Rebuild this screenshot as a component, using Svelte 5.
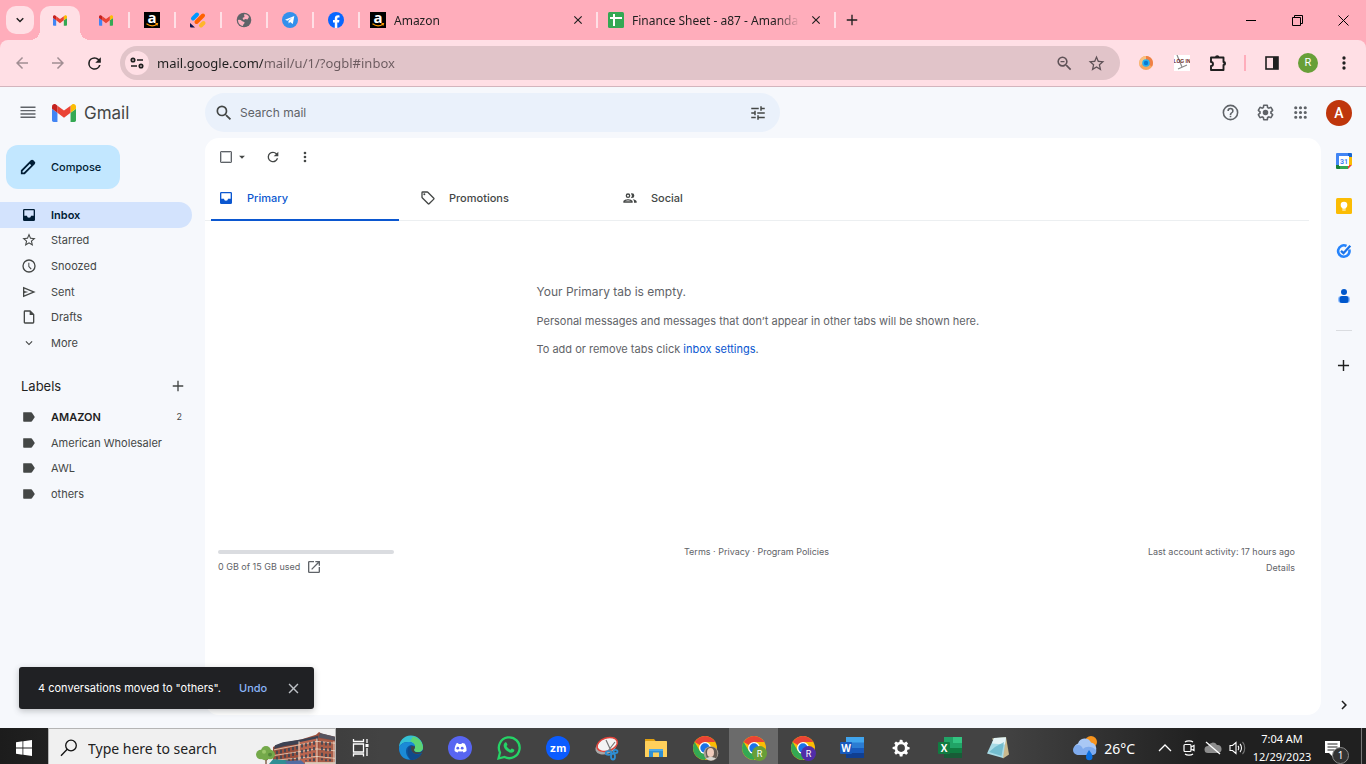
<script lang="ts">
  const icons: Record<string, string> = {
    menu: "M3 18h18v-1.700H3V18zm0-4h18v-1.700H3V14zm0-4h18V8.300H3V10zm0-5.700V6h18V4.300H3z",
    search:
      "M15.500 14h-.79l-.28-.27A6.470 6.470 0 0 0 16 9.500 6.500 6.500 0 1 0 9.500 16c1.610 0 3.090-.59 4.230-1.570l.27.28v.79l5 4.990L20.490 19l-4.990-5zm-6 0C7.010 14 5 11.990 5 9.500S7.010 5 9.500 5 14 7.010 14 9.500 11.990 14 9.500 14z",
    tune: "M3 17v2h6v-2H3zM3 5v2h10V5H3zm10 16v-2h8v-2h-8v-2h-2v6h2zM7 9v2H3v2h4v2h2V9H7zm14 4v-2H11v2h10zm-6-4h2V7h4V5h-4V3h-2v6z",
    help: "M11 18h2v-2h-2v2zm1-16a10 10 0 1 0 0 20 10 10 0 0 0 0-20zm0 18a8 8 0 1 1 0-16 8 8 0 0 1 0 16zm0-14a4 4 0 0 0-4 4h2a2 2 0 1 1 4 0c0 2-3 1.750-3 5h2c0-2.250 3-2.500 3-5a4 4 0 0 0-4-4z",
    gear: "M13.850 22.250h-3.700c-.74 0-1.360-.54-1.450-1.270l-.27-1.890c-.27-.14-.53-.29-.79-.46l-1.800.72c-.7.260-1.470-.03-1.810-.65L2.200 15.530c-.35-.66-.2-1.440.36-1.880l1.530-1.190c-.01-.15-.02-.3-.02-.46 0-.15.010-.31.020-.46l-1.520-1.190c-.59-.45-.74-1.260-.37-1.880l1.850-3.190c.34-.62 1.110-.9 1.790-.63l1.810.73c.26-.17.520-.32.780-.46l.27-1.910c.09-.7.710-1.250 1.440-1.250h3.700c.74 0 1.360.54 1.450 1.270l.27 1.890c.27.140.53.290.79.460l1.800-.72c.71-.26 1.480.03 1.820.65l1.840 3.180c.36.660.2 1.440-.36 1.880l-1.520 1.190c.01.150.02.300.02.460s-.01.310-.02.460l1.520 1.190c.56.450.72 1.230.37 1.860l-1.860 3.220c-.34.620-1.110.9-1.800.63l-1.800-.72c-.26.170-.52.320-.78.460l-.27 1.910c-.1.680-.72 1.220-1.460 1.220zm-3.230-2h2.760l.37-2.550.53-.22c.44-.18.880-.44 1.340-.78l.45-.34 2.380.96 1.380-2.400-2.030-1.580.07-.56c.03-.26.060-.51.060-.78s-.03-.53-.06-.78l-.07-.56 2.030-1.580-1.390-2.400-2.390.96-.45-.35c-.42-.32-.87-.58-1.330-.77l-.52-.22-.37-2.550h-2.760l-.37 2.550-.53.210c-.44.190-.88.440-1.340.79l-.45.330-2.380-.95-1.390 2.390 2.030 1.580-.07.56a7 7 0 0 0-.06.790c0 .26.020.53.060.78l.07.560-2.030 1.580 1.380 2.400 2.390-.96.45.350c.43.330.86.580 1.330.77l.53.220.38 2.550zM12 8.500a3.500 3.500 0 1 0 0 7 3.500 3.500 0 0 0 0-7z",
    apps: "M6 8a2 2 0 1 0 0-4 2 2 0 0 0 0 4zm6 0a2 2 0 1 0 0-4 2 2 0 0 0 0 4zm6 0a2 2 0 1 0 0-4 2 2 0 0 0 0 4zM6 14a2 2 0 1 0 0-4 2 2 0 0 0 0 4zm6 0a2 2 0 1 0 0-4 2 2 0 0 0 0 4zm6 0a2 2 0 1 0 0-4 2 2 0 0 0 0 4zM6 20a2 2 0 1 0 0-4 2 2 0 0 0 0 4zm6 0a2 2 0 1 0 0-4 2 2 0 0 0 0 4zm6 0a2 2 0 1 0 0-4 2 2 0 0 0 0 4z",
    pencil:
      "M20.700 4.600l-1.500-1.500a2.500 2.500 0 0 0-3.500 0L2.500 16.300V21.500h5.200L20.900 8.300a2.500 2.500 0 0 0-.2-3.700zM6.500 19.300l-1.800.1v-1.900l9.800-9.800 1.800 1.800-9.800 9.800z",
    inbox: "M19 3H5a2 2 0 0 0-2 2v14a2 2 0 0 0 2 2h14a2 2 0 0 0 2-2V5a2 2 0 0 0-2-2zm0 10h-4a3 3 0 0 1-6 0H5V5h14v8z",
    star: "M22 9.240l-7.190-.62L12 2 9.190 8.630 2 9.240l5.460 4.730L5.820 21 12 17.270 18.180 21l-1.630-7.030L22 9.240zM12 15.400l-3.760 2.270 1-4.280-3.320-2.880 4.380-.38L12 6.100l1.710 4.040 4.380.38-3.320 2.880 1 4.280L12 15.400z",
    clock: "M12 2a10 10 0 1 0 0 20 10 10 0 0 0 0-20zm0 18a8 8 0 1 1 0-16 8 8 0 0 1 0 16zm.5-13H11v6l3.700 4.200 1.300-1-3.500-4V7z",
    send: "M3 20V4l19 8L3 20zm2-3l11.850-5L5 7v3.500l6 1.500-6 1.500V17z",
    draft: "M14 2H6a2 2 0 0 0-2 2v16c0 1.100.9 2 2 2h12a2 2 0 0 0 2-2V8l-6-6zM6 20V4h7v5h5v11H6z",
    down: "M7.410 8.590L12 13.170l4.590-4.580L18 10l-6 6-6-6z",
    chevron: "M6.500 7.500L12 13l5.500-5.500L19.600 9.600 12 17.200 4.400 9.600z",
    right: "M8.590 16.590L13.170 12 8.590 7.410 10 6l6 6-6 6z",
    plus: "M19 12.900h-6.100V19h-1.800v-6.100H5v-1.800h6.100V5h1.800v6.100H19z",
    label: "M3 4h12.500c.8 0 1.500.4 1.900 1L22 12l-4.600 7c-.4.600-1.100 1-1.900 1H3c-1 0-1-1-1-1V5s0-1 1-1z",
    refresh:
      "M17.650 6.350A7.960 7.960 0 0 0 12 4a8 8 0 1 0 7.730 10h-2.080A6 6 0 1 1 12 6c1.660 0 3.140.69 4.220 1.780L13 11h7V4l-2.350 2.350z",
    more: "M12 8a2 2 0 1 0 0-4 2 2 0 0 0 0 4zm0 2a2 2 0 1 0 0 4 2 2 0 0 0 0-4zm0 6a2 2 0 1 0 0 4 2 2 0 0 0 0-4z",
    caret: "M7 10l5 5 5-5z",
    tag: "M21.410 11.580l-9-9A2 2 0 0 0 11 2H4a2 2 0 0 0-2 2v7c0 .55.220 1.050.59 1.420l9 9a2 2 0 0 0 2.820 0l7-7a2 2 0 0 0 0-2.840zM13 20L4 11V4h7l9 9-7 7zM6.500 5a1.500 1.500 0 1 0 0 3 1.500 1.500 0 0 0 0-3z",
    people:
      "M9 13.750c-2.340 0-7 1.170-7 3.500V19h14v-1.750c0-2.330-4.660-3.500-7-3.500zM4.340 17c.84-.58 2.870-1.250 4.660-1.250s3.820.67 4.660 1.250H4.340zM9 12a3.500 3.500 0 1 0 0-7 3.500 3.500 0 0 0 0 7zm0-5a1.500 1.500 0 1 1 0 3 1.500 1.500 0 0 1 0-3zm7.040 6.810c1.160.84 1.960 1.960 1.960 3.440V19h4v-1.750c0-2.020-3.500-3.170-5.960-3.440zM15 12a3.500 3.500 0 1 0 0-7c-.54 0-1.040.13-1.500.350a5 5 0 0 1 0 6.300c.46.220.96.350 1.500.350z",
    open: "M19 19H5V5h7V3H5a2 2 0 0 0-2 2v14a2 2 0 0 0 2 2h14a2 2 0 0 0 2-2v-7h-2v7zM14 3v2h3.590l-9.830 9.830 1.410 1.410L19 6.410V10h2V3h-7z",
    close: "M19 6.410L17.590 5 12 10.590 6.410 5 5 6.410 10.590 12 5 17.590 6.410 19 12 13.410 17.590 19 19 17.590 13.410 12z",
    back: "M20 11H7.830l5.590-5.590L12 4l-8 8 8 8 1.410-1.410L7.830 13H20v-2z",
    forward: "M4 11h12.170l-5.590-5.590L12 4l8 8-8 8-1.410-1.410L16.170 13H4v-2z",
    zoomOut:
      "M15.500 14h-.79l-.28-.27A6.470 6.470 0 0 0 16 9.500 6.500 6.500 0 1 0 9.500 16c1.610 0 3.090-.59 4.230-1.570l.27.28v.79l5 4.990L20.490 19l-4.990-5zm-6 0C7.010 14 5 11.990 5 9.500S7.010 5 9.500 5 14 7.010 14 9.500 11.990 14 9.500 14zM7 8.700h5v1.600H7z",
    settings:
      "M12 1l1.700.2.6 2.800 2 .9 2.500-1.500 2.300 2.400-1.500 2.400.8 2 2.800.6v2.600l-2.800.6-.8 2 1.500 2.400-2.300 2.400-2.500-1.500-2 .9-.6 2.800h-3.400L9.700 20l-2-.9-2.500 1.500-2.300-2.400 1.500-2.400-.8-2-2.800-.6v-2.600l2.800-.6.8-2-1.500-2.400 2.300-2.400 2.500 1.500 2-.9.600-2.800zM12 7a5 5 0 1 0 0 10 5 5 0 0 0 0-10z",
  };

  const pinnedTabs = ["gmail", "amazon", "jotform", "globe", "telegram", "facebook"];
  const openTabs = [
    { icon: "amazon", title: "Amazon" },
    { icon: "sheets", title: "Finance Sheet - a87 - Amanda H" },
  ];

  const folders = [
    { icon: "inbox", name: "Inbox" },
    { icon: "star", name: "Starred" },
    { icon: "clock", name: "Snoozed" },
    { icon: "send", name: "Sent" },
    { icon: "draft", name: "Drafts" },
    { icon: "down", name: "More" },
  ];

  const labels = [
    { name: "AMAZON", unread: 2 },
    { name: "American Wholesaler", unread: 0 },
    { name: "AWL", unread: 0 },
    { name: "others", unread: 0 },
  ];

  const categories = [
    { icon: "inbox", name: "Primary" },
    { icon: "tag", name: "Promotions" },
    { icon: "people", name: "Social" },
  ];

  const addons = ["calendar", "keep", "tasks", "contacts"];

  const taskbarApps = [
    "edge", "discord", "whatsapp", "zoom", "snip", "explorer", "chrome-photo",
    "chrome-green", "chrome-purple", "word", "settings", "excel", "notepad",
  ];

  let folder = $state("Inbox");
  let category = $state("Primary");
  let toastOpen = $state(true);
  let url = $state("mail.google.com/mail/u/1/?ogbl#inbox");
</script>

{#snippet icon(name: string, size = 16)}
  <svg class="icon" width={size} height={size} viewBox="0 0 24 24" fill="currentColor" aria-hidden="true">
    <path d={icons[name]} />
  </svg>
{/snippet}

{#snippet gmailLogo(width: number, height: number)}
  <svg class="icon" {width} {height} viewBox="52 42 88 66" aria-hidden="true">
    <path fill="#4285f4" d="M58 108h14V74L52 59v43c0 3.320 2.690 6 6 6" />
    <path fill="#34a853" d="M120 108h14c3.320 0 6-2.690 6-6V59l-20 15" />
    <path fill="#fbbc04" d="M120 48v26l20-15v-8c0-7.420-8.470-11.650-14.400-7.200" />
    <path fill="#ea4335" d="M72 74V48l24 18 24-18v26L96 92" />
    <path fill="#c5221f" d="M52 51v8l20 15V48l-5.600-4.200c-5.940-4.450-14.400-.22-14.400 7.200" />
  </svg>
{/snippet}

{#snippet favicon(name: string)}
  {#if name === "gmail"}
    {@render gmailLogo(14, 11)}
  {:else}
    <svg class="icon" width="16" height="16" viewBox="0 0 16 16" aria-hidden="true">
      {#if name === "amazon"}
        <rect width="16" height="16" fill="#000" />
        <text x="8" y="11" text-anchor="middle" font-size="15" font-weight="700" fill="#fff" font-family="Open Sans, sans-serif">a</text>
        <path d="M2.500 11.800c3.500 2.500 7.500 2.400 10.500.4M11.500 11.600l2-.1-.5 2" fill="none" stroke="#f90" stroke-width="1.100" />
      {:else if name === "jotform"}
        <g fill="none" stroke-width="4" stroke-linecap="round">
          <path d="M3 6.500L7 2.500" stroke="#0099ff" />
          <path d="M6.500 10L13 3.500" stroke="#ff6100" />
          <path d="M11 13.500l2.500-2.500" stroke="#ffb629" />
        </g>
        <path d="M0 11l5 4.500H1a1 1 0 0 1-1-1z" fill="#0a1551" />
      {:else if name === "globe"}
        <circle cx="8" cy="8" r="7.300" fill="#5f6368" />
        <path d="M2 8c1.500-.5 3 0 4 1s3 .5 2.500 2-1.500 1-1.500 3c-3-.3-5-3-5-6zM8 2.500c2-.7 4 .5 5 2.500l-1.500 2.500-2-.5-2 1L6.500 6l2-1z" fill="#ffb0bf" />
      {:else if name === "telegram"}
        <circle cx="8" cy="8" r="8" fill="#3390ec" />
        <path d="M3 7.800l9.300-3.900-1.500 8.200-2.700-2-1.400 1.400-.3-2.500 3.700-3.200-4.700 2.900z" fill="#fff" />
      {:else if name === "facebook"}
        <circle cx="8" cy="8" r="8" fill="#0866ff" />
        <path d="M6.800 16v-5.500H5V8h1.800V6.700c0-2.300 1.100-3.400 3.300-3.400.5 0 1 .1 1.400.2v2.100h-.9c-1 0-1.300.4-1.300 1.300V8h2.100l-.4 2.500H9.300V16z" fill="#fff" />
      {:else if name === "sheets"}
        <rect width="16" height="16" rx="1.500" fill="#34a853" />
        <path d="M2 6h12M6 2v12" stroke="#fff" stroke-width="2" />
      {/if}
    </svg>
  {/if}
{/snippet}

{#snippet addon(name: string)}
  <svg class="icon" width="16" height="16" viewBox="0 0 16 16" aria-hidden="true">
    {#if name === "calendar"}
      <path d="M1 0h11v4H4v9H0V1a1 1 0 0 1 1-1z" fill="#4285f4" />
      <path d="M12 0h3a1 1 0 0 1 1 1v3h-4z" fill="#1967d2" />
      <path d="M12 4h4v8h-4z" fill="#fbbc04" />
      <path d="M0 12h4v4H1a1 1 0 0 1-1-1z" fill="#188038" />
      <path d="M4 12h8v4H4z" fill="#34a853" />
      <path d="M12 12h4l-4 4z" fill="#ea4335" />
      <path d="M3 3h10v10H3z" fill="#fff" />
      <text x="8" y="11" text-anchor="middle" font-size="7" font-weight="700" fill="#4285f4" font-family="Roboto, sans-serif">31</text>
    {:else if name === "keep"}
      <rect width="16" height="16" rx="1.500" fill="#fbbc04" />
      <circle cx="8" cy="7" r="3.300" fill="#fff" />
      <path d="M6.300 9h3.400v1.700H6.300zM6.300 11.400h3.400v1.200H6.300z" fill="#fff" />
    {:else if name === "tasks"}
      <path d="M13.300 6.500A5.700 5.700 0 1 1 10.500 3" fill="none" stroke="#2684fc" stroke-width="2.600" />
      <path d="M5 7.800l2.500 2.400 6.800-7.400" fill="none" stroke="#1a73e8" stroke-width="2.300" />
    {:else if name === "contacts"}
      <circle cx="8" cy="4" r="3" fill="#0057cc" />
      <rect x="2" y="8" width="12" height="7" rx="3" fill="#91bfff" />
      <rect x="3.500" y="8" width="9" height="7" rx="2.500" fill="#0057cc" />
    {/if}
  </svg>
{/snippet}

{#snippet chromeIcon()}
  <circle cx="11" cy="11" r="11" fill="#fbbc04" />
  <path d="M11 11L1.500 5.500A11 11 0 0 1 20.500 5.500H11z" fill="#ea4335" />
  <path d="M1.500 5.500A11 11 0 0 0 11 22l4.700-8.200L11 11 6.300 13.700z" fill="#34a853" />
  <circle cx="11" cy="11" r="5.500" fill="#fff" />
  <circle cx="11" cy="11" r="4.300" fill="#1a73e8" />
{/snippet}

{#snippet taskbarIcon(name: string)}
  <svg class="icon" width="26" height="26" viewBox="0 0 26 26" aria-hidden="true">
    {#if name === "edge"}
      <circle cx="13" cy="13" r="12" fill="#0c59a4" />
      <path d="M1 13A12 12 0 0 1 25 12c.3 3-2 5-5 5-2 0-4-.5-4-2 0-1 1-1.500 1-3.500C17 9 14 7 10 7 5 7 1.500 10 1 13z" fill="#35c1d4" />
      <path d="M15 1.500A12 12 0 0 1 25 12c.3 3-2 5-5 5-2 0-4-.5-4-2 0-1 1-1.500 1-3.500 0-3-3-5-5-5z" fill="#66d85c" opacity="0.800" />
      <path d="M1 13c.5-3 4-6 9-6 4 0 7 2 7 4.500-1-1-2.500-1.500-4-1.500-6 1-7 9-1 14.500C5 25 1 19 1 13z" fill="#1b8ad6" />
      <path d="M9.500 16c0-3 1.500-5 4-5.500-2 4 1 9 6 9 1.500 0 3-.5 4-1-2 4-6 6.500-10.500 6.500-2-2-3.500-5-3.500-9z" fill="#114a8b" />
      <path d="M13.500 11c-1.500 3 .5 7.500 5 8 3 .4 5-1 6-2l1-2c-1.500 2-3.500 2.500-5.500 2.500-2 0-4-.8-4-2.500 0-1 1-1.500 1-3.500z" fill="#434343" />
    {:else if name === "discord"}
      <circle cx="13" cy="13" r="12" fill="#5865f2" />
      <path d="M8.500 8.500L11 8l.6 1h2.800l.6-1 2.500.5c1.500 2 2.300 4.500 2 7.500-1 .9-2 1.300-3 1.500l-.8-1.200c-1.300.4-2.800.4-4.200 0l-.8 1.200c-1.200-.2-2.200-.7-3.100-1.500-.2-3 .5-5.500 2-7.500z" fill="#fff" />
      <circle cx="10.800" cy="13.200" r="1.400" fill="#5865f2" />
      <circle cx="15.200" cy="13.200" r="1.400" fill="#5865f2" />
    {:else if name === "whatsapp"}
      <path d="M2.500 23.500l1.500-6A10.400 10.400 0 1 1 8.500 22z" fill="none" stroke="#25d366" stroke-width="2.300" />
      <path d="M9 7.500c.6-.5 1.300-.4 1.600.3l.8 1.700c.2.600-.6 1.200-.9 1.600.8 1.700 2 2.900 3.900 3.700.6-.6 1-1.500 1.600-1.300l2 1c.7.400.2 1.600-.3 2.200-2.300 2-5.500.5-7.500-1.400C7.800 13 6.500 9.800 9 7.500z" fill="#25d366" />
    {:else if name === "zoom"}
      <circle cx="13" cy="13" r="12" fill="#0b5cff" />
      <text x="13" y="17" text-anchor="middle" font-size="11" font-weight="700" fill="#fff" font-family="Inter, sans-serif">zm</text>
    {:else if name === "snip"}
      <ellipse cx="12" cy="12" rx="11" ry="7" transform="rotate(-20 12 12)" fill="#a9a9a9" />
      <ellipse cx="13" cy="9.500" rx="10.500" ry="6.500" transform="rotate(-18 13 9)" fill="#f4f4f4" stroke="#e0433b" stroke-width="1.500" />
      <path d="M12 5l6 13M21 7l-7 9" stroke="#777" stroke-width="1.200" />
      <g fill="none" stroke="#2f8fd3" stroke-width="1.800">
        <ellipse cx="14.500" cy="18" rx="2.800" ry="1.800" />
        <ellipse cx="19" cy="21.500" rx="2" ry="3" />
        <ellipse cx="21.500" cy="16.500" rx="2" ry="1.600" />
      </g>
    {:else if name === "explorer"}
      <path d="M2 4h9l2 2.500H2z" fill="#e0a010" />
      <rect x="2" y="6" width="22" height="16" rx="0.500" fill="#ffd05b" />
      <path d="M6 14h14v8h-4v-4.500h-6V22H6z" fill="#2f8fd3" />
      <path d="M6 14h14v2H6z" fill="#4fa9e4" />
    {:else if name.startsWith("chrome")}
      <g transform="translate(1 1) scale(1.09)">{@render chromeIcon()}</g>
      {#if name === "chrome-photo"}
        <circle cx="19" cy="18.500" r="7.300" fill="#a9a196" />
        <path d="M13.500 17c0-6 10-7 11.500-1 1 5-1 9-4 9.500l-6-1.500z" fill="#655b53" />
        <ellipse cx="18.500" cy="17.500" rx="3.500" ry="4.500" fill="#f0cdbd" />
        <path d="M14 23.500c2-2 7-2 10 0a7.300 7.300 0 0 1-10 0z" fill="#d8d6d0" />
      {:else}
        <circle cx="18.500" cy="18.500" r="7.500" fill={name === "chrome-green" ? "#689f38" : "#512da8"} />
        <text x="18.500" y="22" text-anchor="middle" font-size="9" fill="#fff" font-family="Roboto, sans-serif">R</text>
      {/if}
    {:else if name === "word" || name === "excel"}
      {#if name === "word"}
        <path d="M7 2h18v6H7z" fill="#41a5ee" />
        <path d="M7 7.500h18V13H7z" fill="#2b7cd3" />
        <path d="M7 13h18v5H7z" fill="#185abd" />
        <path d="M7 18h18v5H7z" fill="#103f91" />
      {:else}
        <path d="M7 2h18v21H7z" fill="#185c37" />
        <path d="M7 2h9v6H7zM7 8h9v5H7z" fill="#21a366" />
        <path d="M16 2h9v6h-9z" fill="#33c481" />
        <path d="M16 8h9v5h-9z" fill="#21a366" />
        <path d="M16 13h9v5h-9zM7 13h9v5H7z" fill="#107c41" />
      {/if}
      <rect x="1" y="7" width="12" height="12" rx="1" fill={name === "word" ? "#185abd" : "#107c41"} />
      <text x="7" y="17" text-anchor="middle" font-size="10" font-weight="700" fill="#fff" font-family="Open Sans, sans-serif">{name === "word" ? "W" : "X"}</text>
    {:else if name === "settings"}
      <g transform="translate(4 4) scale(.76)"><path d={icons.settings} fill="#fff" fill-rule="evenodd" /></g>
    {:else if name === "notepad"}
      <path d="M6 3.500L20 2l3 17.500-6 4z" fill="#c9b98d" />
      <path d="M8 3l12-.5L17 23 1 18.500z" fill="#a8dbe6" />
      <path d="M8 3l12-.5-1 7-13-1z" fill="#e4f3f5" />
      <path d="M9 12l9-5-2.500 14L3 17z" fill="#5cb0c4" opacity="0.700" />
    {/if}
  </svg>
{/snippet}

<div class="screen">
  <header class="browser">
    <div class="tabstrip">
      <button class="tab-search" aria-label="Search tabs">{@render icon("chevron", 12)}</button>
      <button class="tab tab-active" aria-label="Inbox">{@render favicon("gmail")}</button>
      {#each pinnedTabs as name}
        <button class="tab tab-pinned" aria-label={name}>{@render favicon(name)}</button>
      {/each}
      {#each openTabs as tab}
        <div class="tab tab-wide">
          {@render favicon(tab.icon)}
          <span class="tab-title">{tab.title}</span>
          <button class="tab-close" aria-label="Close tab">{@render icon("close", 14)}</button>
        </div>
      {/each}
      <button class="new-tab" aria-label="New tab">{@render icon("plus", 18)}</button>
      <div class="window-controls">
        <button aria-label="Minimize">
          <svg width="10" height="10" viewBox="0 0 10 10"><path d="M0 5.500h10" stroke="#000" /></svg>
        </button>
        <button aria-label="Restore">
          <svg width="11" height="11" viewBox="0 0 11 11" fill="none" stroke="#000">
            <path d="M.5 2.500h8v8h-8zM2.500 2.500v-2h8v8h-2" />
          </svg>
        </button>
        <button aria-label="Close window">
          <svg width="11" height="11" viewBox="0 0 11 11"><path d="M.5.500l10 10M10.500.500l-10 10" stroke="#000" /></svg>
        </button>
      </div>
    </div>

    <div class="toolbar">
      <button class="tool tool-dim" aria-label="Back">{@render icon("back", 18)}</button>
      <button class="tool tool-dim" aria-label="Forward">{@render icon("forward", 18)}</button>
      <button class="tool" aria-label="Reload">{@render icon("refresh", 19)}</button>
      <div class="omnibox">
        <button class="site-info" aria-label="Site information">
          <svg width="14" height="12" viewBox="0 0 14 12" fill="none" stroke="#1f1f1f" stroke-width="1.700">
            <circle cx="3" cy="3" r="1.700" />
            <path d="M7 3h6M1 9h6" />
            <circle cx="11" cy="9" r="1.700" />
          </svg>
        </button>
        <input class="url" type="text" aria-label="Address" bind:value={url} />
        <button class="omni-button" aria-label="Zoom">{@render icon("zoomOut", 19)}</button>
        <button class="omni-button" aria-label="Bookmark">{@render icon("star", 19)}</button>
      </div>
      <button class="tool" aria-label="Extension">
        <svg width="16" height="16" viewBox="0 0 16 16">
          <circle cx="8" cy="8" r="7" fill="#f6a65c" />
          <path d="M8 1a7 7 0 0 1 6 10.500L8 8z" fill="#ef7f45" />
          <path d="M2 11A7 7 0 0 1 8 1v4z" fill="#f9c07f" />
          <circle cx="8" cy="8" r="3.800" fill="#29b1ee" />
          <circle cx="8" cy="8" r="2.200" fill="#087bd3" />
        </svg>
      </button>
      <button class="tool" aria-label="Log in extension">
        <svg width="16" height="16" viewBox="0 0 16 16">
          <rect width="16" height="16" fill="#fff" />
          <path d="M3 0l5 12M4 14l9-4" stroke="#8b8b8b" stroke-width="1.200" />
          <text x="8" y="8" text-anchor="middle" font-size="5" font-weight="700" fill="#6b2525" font-family="Liberation Sans, sans-serif">LOG IN</text>
        </svg>
      </button>
      <button class="tool" aria-label="Extensions">
        <svg width="18" height="18" viewBox="0 0 18 18">
          <path d="M2 3.500h12.500V8a1.500 1.500 0 0 1 0 3v5H2v-4a2 2 0 0 0 0-4z" fill="none" stroke="#1f1f1f" stroke-width="1.900" stroke-linejoin="round" />
          <path d="M6 3.500a2.200 2.200 0 0 1 4.400 0zM14.500 7.200a2.200 2.200 0 0 1 0 4.400z" fill="#1f1f1f" />
        </svg>
      </button>
      <span class="tool-divider"></span>
      <button class="tool" aria-label="Side panel">
        <svg width="14" height="14" viewBox="0 0 14 14">
          <rect x="1" y="1" width="12" height="12" fill="none" stroke="#1f1f1f" stroke-width="1.600" />
          <path d="M8 1h5v12H8z" fill="#1f1f1f" />
        </svg>
      </button>
      <button class="tool" aria-label="Profile"><span class="profile">R</span></button>
      <button class="tool" aria-label="Menu">{@render icon("more", 20)}</button>
    </div>
  </header>

  <div class="gmail">
    <header class="gmail-header">
      <div class="brand">
        <button class="plain" aria-label="Main menu">{@render icon("menu", 20)}</button>
        <a class="logo" href="#inbox">{@render gmailLogo(24, 18)}<span>Gmail</span></a>
      </div>
      <form class="search" role="search">
        <button class="plain" type="button" aria-label="Search">{@render icon("search", 20)}</button>
        <input type="text" placeholder="Search mail" aria-label="Search mail" />
        <button class="plain" type="button" aria-label="Search options">{@render icon("tune", 18)}</button>
      </form>
      <div class="header-actions">
        <button class="plain" aria-label="Support">{@render icon("help", 19)}</button>
        <button class="plain" aria-label="Settings">{@render icon("gear", 19)}</button>
        <button class="plain" aria-label="Google apps">{@render icon("apps", 19)}</button>
        <button class="account" aria-label="Account">A</button>
      </div>
    </header>

    <div class="gmail-body">
      <aside class="sidebar">
        <button class="compose">{@render icon("pencil", 18)}<span>Compose</span></button>
        <nav class="folders">
          {#each folders as item}
            <a
              class="nav-item"
              class:nav-item-active={folder === item.name}
              href="#{item.name.toLowerCase()}"
              onclick={() => (folder = item.name)}
            >
              {@render icon(item.icon, item.icon === "down" ? 14 : 16)}
              <span>{item.name}</span>
            </a>
          {/each}
        </nav>
        <div class="labels-header">
          <h2>Labels</h2>
          <button class="plain" aria-label="Create new label">{@render icon("plus", 18)}</button>
        </div>
        <nav class="labels">
          {#each labels as label}
            <a class="nav-item" class:nav-item-unread={label.unread > 0} href="#label">
              {@render icon("label", 14)}
              <span>{label.name}</span>
              {#if label.unread}<span class="count">{label.unread}</span>{/if}
            </a>
          {/each}
        </nav>
      </aside>

      <main class="panel">
        <div class="actions">
          <input type="checkbox" aria-label="Select all" />
          <button class="plain select-menu" aria-label="Select">{@render icon("caret", 14)}</button>
          <button class="plain" aria-label="Refresh">{@render icon("refresh", 16)}</button>
          <button class="plain" aria-label="More">{@render icon("more", 16)}</button>
        </div>
        <div class="categories" role="tablist">
          {#each categories as item}
            <button
              class="category"
              class:category-active={category === item.name}
              role="tab"
              aria-selected={category === item.name}
              onclick={() => (category = item.name)}
            >
              {@render icon(item.icon, 16)}
              <span>{item.name}</span>
            </button>
          {/each}
        </div>
        <section class="empty">
          <p class="empty-title">Your Primary tab is empty.</p>
          <p>Personal messages and messages that don’t appear in other tabs will be shown here.</p>
          <p>To add or remove tabs click <a href="#settings">inbox settings</a>.</p>
        </section>
        <footer class="footer">
          <div>
            <div class="quota"></div>
            <a class="storage" href="#storage">0 GB of 15 GB used {@render icon("open", 16)}</a>
          </div>
          <div class="links"><a href="#terms">Terms</a> · <a href="#privacy">Privacy</a> · <a href="#policies">Program Policies</a></div>
          <div class="activity">Last account activity: 17 hours ago<br /><a href="#details">Details</a></div>
        </footer>
      </main>

      <aside class="addons">
        {#each addons as name}
          <button class="addon" aria-label={name}>{@render addon(name)}</button>
        {/each}
        <hr />
        <button class="addon addon-plus" aria-label="Get add-ons">{@render icon("plus", 19)}</button>
        <button class="collapse" aria-label="Hide side panel">{@render icon("right", 18)}</button>
      </aside>
    </div>

    {#if toastOpen}
      <div class="toast" role="status">
        <span>4 conversations moved to "others".</span>
        <button class="undo">Undo</button>
        <button class="dismiss" aria-label="Dismiss" onclick={() => (toastOpen = false)}>{@render icon("close", 17)}</button>
      </div>
    {/if}
  </div>

  <footer class="taskbar">
    <button class="start" aria-label="Start">
      <svg width="16" height="16" viewBox="0 0 16 16" fill="#fff">
        <path d="M0 2.200l6.500-.9v6.300H0zM7.300 1.200L16 0v7.600H7.300zM0 8.400h6.500v6.300L0 13.800zM7.300 8.400H16V16l-8.700-1.200z" />
      </svg>
    </button>
    <div class="taskbar-search">
      <svg width="18" height="18" viewBox="0 0 18 18" fill="none" stroke="#111" stroke-width="1.300">
        <circle cx="11" cy="6.500" r="5.300" />
        <path d="M7.200 10.300L1 16.800" />
      </svg>
      <input type="text" placeholder="Type here to search" aria-label="Type here to search" />
      <svg class="building" width="80" height="33" viewBox="0 0 80 35" preserveAspectRatio="none" aria-hidden="true">
        <path d="M18 17l8-4 20-4 15-5 3-3 3 2 13 3v29H18z" fill="#9c4f3c" />
        <path d="M20 15l8-3 18-3 17-4v6L30 16l-11 3z" fill="#3d4252" />
        <path d="M65 2l15 4v4l-17-3z" fill="#55545f" />
        <path d="M64 8l16 3v24H64z" fill="#a85d48" />
        <path d="M44 12l18-4v27H44z" fill="#bb6650" />
        <path d="M19 20l43-9 18 2M19 26l43-7 18 2M19 31l43-4 18 2" stroke="#e3cbb5" stroke-width="0.900" fill="none" />
        <path d="M22 21v12M26 20v13M30 19v14M34 18v14M38 17v15M42 16v16M47 14v18M51 13v19M55 12v20M59 11v21M67 11v20M71 12v20M75 12v20" stroke="#3c4554" stroke-width="1.700" stroke-dasharray="3.500 2.500" />
        <path d="M44 11v22M62 8v26M79 11v24" stroke="#efddc9" />
        <path d="M14 35l4-5 14 1 10 4z" fill="#2f8f94" />
        <path d="M30 32l16-1 4 4H32z" fill="#526da3" />
        <path d="M50 33h30v2H50z" fill="#d9c9b8" />
        <path d="M11 28v7M8 27l3 4 4-4" stroke="#765137" stroke-width="1.300" fill="none" />
        <g fill="#74a94a">
          <circle cx="11" cy="21" r="5" />
          <circle cx="6" cy="25" r="5" />
          <circle cx="15" cy="25" r="5" />
          <circle cx="10" cy="26" r="5" />
        </g>
        <circle cx="9" cy="22" r="2" fill="#9bc76b" />
        <circle cx="15" cy="25" r="2" fill="#528737" />
      </svg>
    </div>
    <button class="task-view" aria-label="Task view">
      <svg width="18" height="18" viewBox="0 0 18 18" fill="none" stroke="#fff" stroke-width="1.300">
        <path d="M1.500 5h10v8h-10zM1.500 0v2.500h10V0M1.500 17.500v-2.500h10v2.500M15 0v4M15 9v8" />
        <path d="M13.500 5h3v3h-3z" fill="#fff" stroke="none" />
      </svg>
    </button>
    {#each taskbarApps as name}
      <button class="task" class:task-active={name === "chrome-green"} aria-label={name}>{@render taskbarIcon(name)}</button>
    {/each}
    <div class="tray">
      <button class="weather">
        <svg width="26" height="26" viewBox="0 0 26 26" aria-hidden="true">
          <circle cx="19" cy="7" r="6" fill="#f7941d" />
          <path d="M7 20a6 6 0 0 1-1-11.500 7 7 0 0 1 13-1 6.500 6.500 0 0 1 1 12.500z" fill="#a9c8f5" />
          <path d="M6 20a5 5 0 0 1 0-10c3 0 4 2 5 4 3-3 9-3 13 1 1 3-1 5-4 5z" fill="#7fabed" />
          <path d="M17 15c2.500 3.500 3.500 5 3.500 7a3.200 3.200 0 0 1-6.500 0c0-2 1-3.500 3-7z" fill="#0a6fe0" />
        </svg>
        26°C
      </button>
      <button class="tray-icon" aria-label="Show hidden icons">
        <svg width="14" height="8" viewBox="0 0 14 8" fill="none" stroke="#fff" stroke-width="1.300"><path d="M1 7l6-6 6 6" /></svg>
      </button>
      <button class="tray-icon" aria-label="Meet now">
        <svg width="14" height="16" viewBox="0 0 14 16" fill="none" stroke="#fff" stroke-width="1.200">
          <rect x="2" y="4.500" width="7" height="7" rx="1" />
          <path d="M9 7l3-1.500v5L9 9M3 2c2-1.500 6-1.500 8 0M3 14c2 1.500 6 1.500 8 0" />
        </svg>
      </button>
      <button class="tray-icon" aria-label="OneDrive">
        <svg width="18" height="14" viewBox="0 0 18 14">
          <path d="M4 12a3.500 3.500 0 0 1 0-7 5 5 0 0 1 9-1 4 4 0 0 1 1 8z" fill="#8d8d8d" />
          <path d="M2 1l14 12" stroke="#fff" stroke-width="1.300" />
        </svg>
      </button>
      <button class="tray-icon" aria-label="Volume">
        <svg width="17" height="14" viewBox="0 0 17 14" fill="none" stroke="#fff" stroke-width="1.100">
          <path d="M1 4.500h2.500L7 1.500v11L3.500 9.500H1z" />
          <path d="M9 5c1 1 1 3 0 4M11 3c2 2 2 6 0 8" />
          <path d="M13.500 1c3 3 3 9 0 12" stroke="#777" />
        </svg>
      </button>
      <button class="clock"><span>7:04 AM</span><span>12/29/2023</span></button>
      <button class="notifications" aria-label="Notifications">
        <svg width="18" height="17" viewBox="0 0 18 17">
          <path d="M1 1h15v12H9v4l-4-4H1z" fill="#fff" />
          <path d="M3.500 4h10M3.500 7h10M3.500 10h7" stroke="#222" />
        </svg>
        <span class="badge">1</span>
      </button>
      <span class="show-desktop"></span>
    </div>
  </footer>
</div>

<style>
  :global(body) {
    margin: 0;
  }

  .screen {
    display: flex;
    flex-direction: column;
    height: 100vh;
    overflow: hidden;
    font-family: Inter, "Liberation Sans", sans-serif;
    font-size: 11px;
    color: #444746;
  }

  button,
  input {
    font: inherit;
    color: inherit;
    border: none;
    background: none;
    padding: 0;
    margin: 0;
  }

  input:focus {
    outline: none;
  }

  button {
    display: flex;
    align-items: center;
    justify-content: center;
    cursor: pointer;
  }

  a {
    color: inherit;
    text-decoration: none;
  }

  .icon {
    display: block;
    flex-shrink: 0;
    overflow: visible;
  }

  /* browser chrome */
  .browser {
    background: #ffadbb;
    color: #1f1f1f;
    font-family: "Noto Sans", "Open Sans", sans-serif;
  }

  .tabstrip {
    display: flex;
    align-items: center;
    height: 40px;
    padding-left: 6px;
  }

  .tab-search {
    width: 28px;
    height: 28px;
    margin-right: 6px;
    border-radius: 10px;
    background: #ffdfe5;
  }

  .tab {
    position: relative;
    display: flex;
    align-items: center;
    height: 34px;
    box-sizing: border-box;
  }

  .tab-active {
    align-self: flex-end;
    width: 40px;
    margin-right: 3px;
    padding-bottom: 6px;
    border-radius: 10px 10px 0 0;
    background: #ffdfe5;
  }

  .tab-active::before,
  .tab-active::after {
    content: "";
    position: absolute;
    bottom: 0;
    width: 10px;
    height: 10px;
  }

  .tab-active::before {
    left: -10px;
    background: radial-gradient(circle at 0 0, transparent 10px, #ffdfe5 10px);
  }

  .tab-active::after {
    right: -10px;
    background: radial-gradient(circle at 100% 0, transparent 10px, #ffdfe5 10px);
  }

  .tab-pinned {
    width: 46px;
  }

  .tab-pinned::after,
  .tab-wide::after {
    content: "";
    position: absolute;
    right: -1px;
    top: 9px;
    width: 2px;
    height: 16px;
    background: #ffdfe5;
  }

  /* no divider between the active tab and its neighbour's twin */
  .tab-wide {
    flex: 0 1 238px;
    min-width: 0;
    gap: 8px;
    padding: 0 11px;
    font-size: 12px;
  }

  .tab-title {
    flex: 1;
    overflow: hidden;
    white-space: nowrap;
    mask-image: linear-gradient(to right, #000 calc(100% - 24px), transparent);
  }

  .tab-close {
    width: 16px;
    height: 16px;
  }

  .new-tab {
    width: 34px;
    height: 28px;
  }

  .window-controls {
    display: flex;
    margin-left: auto;
  }

  .window-controls button {
    width: 46px;
    height: 40px;
  }

  .toolbar {
    display: flex;
    align-items: center;
    height: 46px;
    padding: 0 4px;
    border-bottom: 1px solid #d3b5bd;
    border-radius: 8px 8px 0 0;
    background: #ffdfe5;
  }

  .tool {
    width: 36px;
    height: 34px;
  }

  .tool-dim {
    color: #a18e93;
  }

  .tool-divider {
    width: 2px;
    height: 16px;
    margin: 0 8px;
    background: #ffadbb;
  }

  .omnibox {
    display: flex;
    align-items: center;
    flex: 1;
    height: 34px;
    margin: 0 8px;
    padding: 0 8px 0 5px;
    box-sizing: border-box;
    border-radius: 17px;
    background: #e1c4c9;
  }

  .site-info {
    width: 24px;
    height: 24px;
    margin-right: 8px;
    border-radius: 50%;
    background: #ffdfe5;
  }

  /* the host part of the address is darker than the path */
  .url {
    flex: 1;
    min-width: 0;
    font-size: 13px;
    color: transparent;
    background: linear-gradient(to right, #1f1f1f 106px, #6b5a5e 106px);
    background-clip: text;
  }

  .omni-button {
    width: 32px;
    height: 32px;
    color: #5f5257;
  }

  .profile {
    width: 20px;
    border-radius: 50%;
    background: #689f38;
    color: #fff;
    font-family: Roboto, sans-serif;
    font-size: 11px;
    line-height: 20px;
  }

  /* mail */
  .gmail {
    position: relative;
    display: flex;
    flex-direction: column;
    flex: 1;
    min-height: 0;
    background: #f6f8fc;
  }

  .gmail-header {
    display: flex;
    align-items: center;
    height: 51px;
  }

  .brand {
    display: flex;
    align-items: center;
    gap: 14px;
    width: 205px;
    padding-left: 18px;
    box-sizing: border-box;
  }

  .brand .plain,
  .header-actions .plain {
    color: #5f6368;
  }

  .logo {
    display: flex;
    align-items: center;
    gap: 8px;
    font-size: 17px;
  }

  .search {
    display: flex;
    align-items: center;
    gap: 6px;
    width: 575px;
    height: 39px;
    padding: 0 13px 0 9px;
    box-sizing: border-box;
    border-radius: 20px;
    background: #eaf1fb;
  }

  .search input {
    flex: 1;
    font-size: 12px;
  }

  .search input::placeholder {
    color: #5f6368;
    opacity: 1;
  }

  .header-actions {
    display: flex;
    align-items: center;
    gap: 16px;
    margin-left: auto;
    padding-right: 14px;
  }

  .account {
    width: 26px;
    height: 26px;
    border-radius: 50%;
    background: #bf360c;
    color: #fff;
    font-family: Roboto, sans-serif;
    font-size: 14px;
    font-weight: 500;
  }

  .gmail-body {
    display: flex;
    flex: 1;
    min-height: 0;
  }

  .sidebar {
    width: 205px;
    padding-top: 7px;
    box-sizing: border-box;
  }

  .compose {
    gap: 14px;
    height: 44px;
    margin: 0 0 13px 6px;
    padding: 0 19px 0 13px;
    border-radius: 12px;
    background: #c2e7ff;
    color: #001d35;
    font-weight: 500;
  }

  .folders,
  .labels {
    display: grid;
    grid-auto-rows: 1fr;
    width: 192px;
  }

  .folders {
    height: 154px;
  }

  .labels {
    height: 103px;
  }

  .nav-item {
    display: grid;
    grid-template-columns: 16px 1fr auto;
    align-items: center;
    justify-items: start;
    column-gap: 14px;
    padding: 0 10px 0 21px;
    border-radius: 0 13px 13px 0;
  }

  .nav-item .icon {
    justify-self: center;
  }

  .nav-item-active {
    background: #d3e3fd;
    color: #001d35;
    font-weight: 600;
  }

  .nav-item-unread {
    color: #1f1f1f;
    font-weight: 600;
  }

  .nav-item-unread .icon {
    color: #444746;
  }

  .count {
    font-size: 9px;
    font-weight: 400;
    color: #444746;
  }

  .labels-header {
    display: flex;
    align-items: center;
    justify-content: space-between;
    height: 18px;
    padding: 21px 18px 9px 21px;
  }

  h2 {
    margin: 0;
    font-size: 13px;
    font-weight: 400;
    color: #1f1f1f;
  }

  .panel {
    display: flex;
    flex-direction: column;
    flex: 1;
    margin-bottom: 13px;
    border-radius: 14px;
    background: #fff;
  }

  .actions {
    display: flex;
    align-items: center;
    height: 38px;
    padding-left: 15px;
  }

  .actions input {
    appearance: none;
    width: 12px;
    height: 12px;
    border: 1px solid #5f6368;
    border-radius: 1px;
    outline: 1px solid #c4c7ca;
    outline-offset: -2px;
  }

  .select-menu {
    margin-left: 3px;
  }

  .actions button + button {
    margin-left: 16px;
  }

  .categories {
    display: flex;
    height: 45px;
    margin-right: 12px;
    box-sizing: border-box;
    border-bottom: 1px solid #eceff1;
  }

  .category {
    position: relative;
    justify-content: flex-start;
    gap: 13px;
    width: 202px;
    padding-left: 13px;
    font-weight: 500;
  }

  .category-active {
    color: #0b57d0;
  }

  .category-active::after {
    content: "";
    position: absolute;
    left: 6px;
    right: 8px;
    bottom: -1px;
    height: 2px;
    background: #0b57d0;
  }

  .empty {
    width: 440px;
    margin: 61px auto 0;
    padding-right: 13px;
    color: #5f6368;
  }

  .empty p {
    margin: 0 0 10px;
    line-height: 18px;
    white-space: nowrap;
  }

  .empty .empty-title {
    line-height: 20px;
    font-size: 12px;
  }

  .empty a {
    color: #0b57d0;
  }

  .footer {
    display: grid;
    grid-template-columns: 1fr auto 1fr;
    margin-top: 176px;
    padding: 0 26px 0 13px;
    font-size: 9px;
    line-height: 16px;
    color: #5f6368;
  }

  .quota {
    width: 176px;
    height: 4px;
    margin: 6px 0 5px;
    border-radius: 2px;
    background: #dadce0;
  }

  .storage {
    display: flex;
    align-items: center;
    gap: 6px;
  }

  .activity {
    text-align: right;
  }

  .addons {
    display: flex;
    flex-direction: column;
    align-items: center;
    width: 45px;
    color: #1f1f1f;
  }

  .addon {
    width: 45px;
    height: 45px;
  }

  hr {
    width: 16px;
    margin: 12px 0;
    border: none;
    border-top: 1px solid #dadce0;
  }

  .collapse {
    margin-top: auto;
    padding-bottom: 14px;
  }

  .toast {
    position: absolute;
    left: 19px;
    bottom: 19px;
    display: flex;
    align-items: center;
    gap: 18px;
    height: 42px;
    padding: 0 12px 0 19px;
    border-radius: 3px;
    background: #202124;
    color: #fff;
    box-shadow: 0 2px 6px rgba(60, 64, 67, 0.3);
  }

  .undo {
    color: #8ab4f8;
    font-weight: 500;
  }

  .dismiss {
    color: #bdc1c6;
  }

  /* taskbar */
  .taskbar {
    display: flex;
    height: 36px;
    background: linear-gradient(to right, #1c1c1c 0, #434343 380px, #434343 1000px, #202020 1200px);
    color: #fff;
    font-family: "Noto Sans", "Open Sans", sans-serif;
  }

  .taskbar button {
    padding-top: 4px;
    box-sizing: border-box;
  }

  .start {
    width: 48px;
  }

  .taskbar-search {
    display: flex;
    align-items: center;
    gap: 10px;
    width: 288px;
    padding-left: 11px;
    padding-top: 3px;
    box-sizing: border-box;
    border: 1px solid #b5b5b5;
    border-bottom: none;
    background: #f0f0f0;
  }

  .taskbar-search input {
    flex: 1;
    min-width: 0;
    font-size: 14px;
  }

  .taskbar-search input::placeholder {
    color: #222;
    opacity: 1;
  }

  .building {
    flex-shrink: 0;
    align-self: flex-end;
  }

  .task-view {
    width: 50px;
  }

  .task {
    width: 49px;
  }

  .task-active {
    background: #6b6b6b;
  }

  .tray {
    display: flex;
    align-items: center;
    margin-left: auto;
  }

  .weather {
    gap: 6px;
    height: 36px;
    margin-right: 18px;
    font-size: 14px;
  }

  .tray-icon {
    width: 24px;
    height: 36px;
  }

  .clock {
    flex-direction: column;
    width: 66px;
    font-size: 11px;
    line-height: 18px;
  }

  .taskbar .notifications {
    position: relative;
    justify-content: flex-start;
    width: 46px;
    height: 36px;
    padding-left: 9px;
  }

  .badge {
    position: absolute;
    left: 17px;
    bottom: 0;
    width: 15px;
    border: 1px solid #8b8b8b;
    border-radius: 50%;
    background: #333;
    font-size: 10px;
    line-height: 15px;
  }

  .show-desktop {
    width: 4px;
    height: 36px;
    border-left: 1px solid #777;
  }
</style>
